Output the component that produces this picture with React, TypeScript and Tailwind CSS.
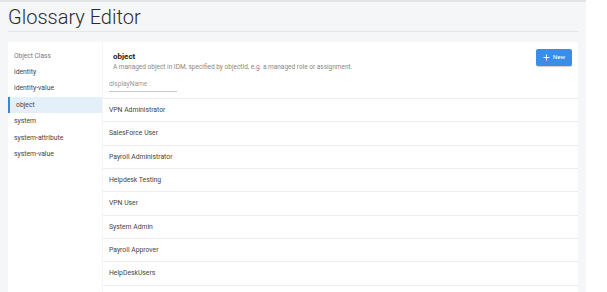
const CLASSES = ["identity", "identity-value", "object", "system", "system-attribute", "system-value"];

const ENTRIES = [
  "VPN Administrator",
  "SalesForce User",
  "Payroll Administrator",
  "Helpdesk Testing",
  "VPN User",
  "System Admin",
  "Payroll Approver",
  "HelpDeskUsers",
];

export default function App() {
  const selected = "object";

  return (
    <div className="flex h-[292px] w-[607px] overflow-hidden bg-white font-['Roboto',sans-serif] text-[#444]">
      <div className="flex w-[586px] flex-col border-t-2 border-[#e3e4e6] bg-[#f5f6f8] px-2">
        {/* Header */}
        <div className="flex h-[30px] items-center border-b border-[#e4e5e7]">
          <h1 className="text-[20px] font-light leading-none text-[#2b2b2b]">Glossary Editor</h1>
        </div>

        <div className="mt-[10px] flex flex-1 gap-px">
          {/* Object class list */}
          <div className="w-[94px] bg-white pt-[8px]">
            <div className="flex h-[14px] items-center pl-[6px] text-[6.6px] text-[#777]">Object Class</div>
            {CLASSES.map((c) => (
              <div
                key={c}
                className={`flex h-[16.4px] items-center text-[6.8px] ${
                  c === selected ? "border-l-2 border-[#2f8ae4] bg-[#e3f0fa] pl-[6px]" : "pl-[6px]"
                }`}
              >
                {c}
              </div>
            ))}
          </div>

          {/* Entries */}
          <div className="flex-1 bg-white">
            <div className="flex h-[57px] flex-col border-b border-[#ececec]">
              <div className="flex justify-between pr-[6px]">
                <div className="pl-[10px] pt-[9px]">
                  <div className="flex h-[12px] items-center text-[8px] font-bold text-[#222]">object</div>
                  <div className="flex h-[10px] items-center text-[6.5px] text-[#888]">
                    A managed object in IDM, specified by objectId, e.g. a managed role or assignment.
                  </div>
                </div>
                <button className="mt-[7px] flex h-[17px] w-[36px] items-center justify-center gap-[3px] rounded-[2px] bg-[#3b8ee7] text-[6.2px] text-white shadow-[0_1px_1px_rgba(0,0,0,0.2)]">
                  <svg width="7" height="7" viewBox="0 0 7 7" fill="none" stroke="white" strokeWidth="1">
                    <path d="M3.5 0.5v6M0.5 3.5h6" />
                  </svg>
                  New
                </button>
              </div>
              <div className="ml-[6px] mt-[5px] flex h-[14px] w-[68px] items-center border-b border-[#c8c8c8] text-[6.6px] text-[#999]">
                displayName
              </div>
            </div>
            {ENTRIES.map((e) => (
              <div key={e} className="flex h-[23.33px] items-center border-b border-[#ececec] pl-[6px] text-[6.8px]">
                {e}
              </div>
            ))}
          </div>
        </div>
      </div>
    </div>
  );
}
